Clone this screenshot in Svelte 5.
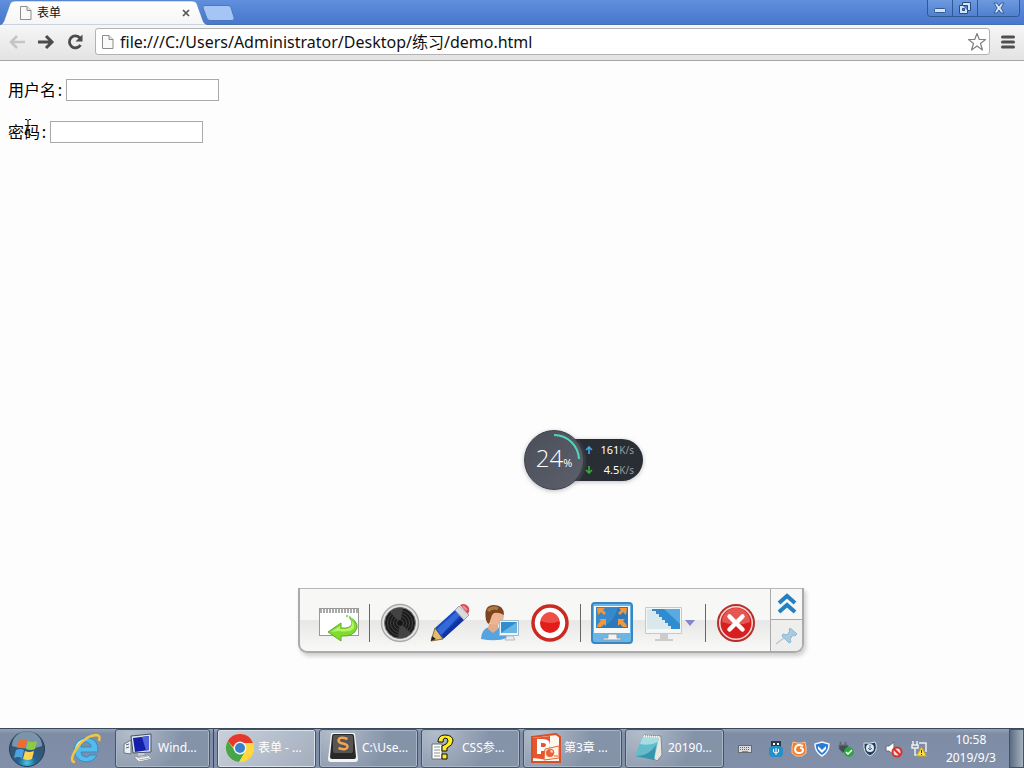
<script>
  let username = $state('');
  let password = $state('');
  const tasks = [
    { id: 'computer', label: 'Wind...', stacked: true },
    { id: 'chrome', label: '表单 - ...', active: true },
    { id: 'sublime', label: 'C:\\Use...' },
    { id: 'help', label: 'CSS参...' },
    { id: 'ppt', label: '第3章 ...' },
    { id: 'notepad', label: '20190...' }
  ];
</script>

{#snippet page()}
  <svg width="12" height="14" viewBox="0 0 12 14" aria-hidden="true">
    <path d="M.5.5h6.5l4 4v9H.5z" fill="#fafafa" stroke="#8d8d8d" />
    <path d="M7 .5v4h4" fill="#e4e4e4" stroke="#8d8d8d" />
  </svg>
{/snippet}

{#snippet taskIcon(id)}
  {#if id === 'computer'}
    <svg width="32" height="30" viewBox="0 0 32 30" aria-hidden="true">
      <path d="M1 11l7-4v14l-7-1z" fill="#eceff0" stroke="#6c7680" />
      <path d="M3 12l3-1M3 15l3-1" stroke="#536574" />
      <path d="M8 3l20-2v18l-18 1z" fill="#dfe5ea" stroke="#445369" />
      <path d="M10 5l16-2v14l-14 2z" fill="#1420a9" />
      <path d="M19 4l7-1v14l-3 .500z" fill="#5364df" />
      <path d="M15 20h6l1 3h-7z" fill="#c6ced4" />
      <path d="M11 24l14-2 4 4-13 3z" fill="#f4f5f4" stroke="#8e98a0" />
      <path d="M14 25l11-2M16 27l11-2" stroke="#a4adb2" />
    </svg>
  {:else if id === 'chrome'}
    <svg width="30" height="30" viewBox="0 0 30 30" aria-hidden="true">
      <circle cx="15" cy="15" r="14" fill="#fbd641" />
      <path d="M2.8 8A14 14 0 0 1 28 10H15a6 6 0 0 0-6 5z" fill="#e5392f" />
      <path d="M2.8 8A14 14 0 0 0 14 29l6-10a6 6 0 0 1-10-1z" fill="#44a54a" />
      <path d="M28 10H15l5 9-6 10A14 14 0 0 0 28 10z" fill="#ffd83d" />
      <circle cx="15" cy="15" r="6.5" fill="#f2f4f3" />
      <circle cx="15" cy="15" r="5" fill="#3b80cc" />
    </svg>
  {:else if id === 'sublime'}
    <svg width="32" height="30" viewBox="0 0 32 30" aria-hidden="true">
      <path d="M4 1q0-1 2-1h20q2 0 2 1l3 25q0 3-3 3H4q-3 0-3-3z" fill="#f4f4f4" />
      <path d="M5 3q0-2 2-2h18q2 0 2 2l2 21q0 2-2 2H5q-2 0-2-2z" fill="#292929" />
      <rect x="6" y="2" width="20" height="18" rx="2" fill="#565553" />
      <path d="M20.500 6q-8-3-9 1 0 3 4.500 3.500 5 1 4.500 3.500-1 4-9 1" fill="none" stroke="#f4a453" stroke-width="2.500" />
    </svg>
  {:else if id === 'help'}
    <svg width="30" height="30" viewBox="0 0 30 30" aria-hidden="true">
      <path d="M3 11h10v15H3z" fill="#fff" stroke="#68727b" />
      <path d="M5 14h6M5 17h6M5 20h6M5 23h6" stroke="#8a9196" />
      <path d="M9 9q0-7 7-7 8 0 8 6 0 4-6 7v3h-5v-5q6-2 6-5 0-3-3-3-2 0-2 4z" fill="#ffed20" stroke="#111" />
      <path d="M13 21h5v5h-5z" fill="#ffed20" stroke="#111" />
    </svg>
  {:else if id === 'ppt'}
    <svg width="30" height="30" viewBox="0 0 30 30" aria-hidden="true">
      <path d="M1 4l24-3 4 3v25H1z" fill="#fff8ed" stroke="#d85028" stroke-width="2" />
      <path d="M2 5l17-2v24L2 25z" fill="#e4572e" />
      <path d="M8 21V8h4q5 0 5 4t-5 4H8" fill="none" stroke="#fff" stroke-width="4" />
      <path d="M14 16l14-3v12l-15 2z" fill="#fff3ea" stroke="#e66a3c" />
      <circle cx="19" cy="20" r="4" fill="#e76236" />
      <path d="M19 20v-4a4 4 0 0 1 4 4zM23 23h4" fill="#ffd9be" stroke="#e76236" />
    </svg>
  {:else}
    <svg width="32" height="30" viewBox="0 0 32 30" aria-hidden="true">
      <path d="M11 2l17 1 1 19-5 6-3-2z" fill="#e7e8df" stroke="#808a8a" />
      <path d="M10 3l16 1-5 23-19-4z" fill="#64bccb" />
      <path d="M10 3l16 1-1 5q-8 4-18 2z" fill="#a6dce3" />
      <path d="M2 23q13 1 21-11l-2 15z" fill="#3796ab" />
      <path d="M11 3l16 1" stroke="#f6f6ef" stroke-width="2" stroke-dasharray="1 1" />
    </svg>
  {/if}
{/snippet}

<div class="screen">
  <header class="titlebar">
    <div class="tab">
      <svg class="tab-shape" width="208" height="25" viewBox="0 0 208 25" aria-hidden="true">
        <defs><linearGradient id="tabfill" x2="0" y2="1"><stop stop-color="#fff" /><stop offset="1" stop-color="#f5f5f5" /></linearGradient></defs>
        <path d="M0 25q3-1 4-4l6-17q1-3 5-3h177q4 0 5 3l6 17q1 3 5 4z" fill="url(#tabfill)" stroke="#456eaa" stroke-opacity=".5" />
      </svg>
      {@render page()}
      <span class="tab-title">表单</span>
      <button class="plain" aria-label="关闭标签页">
        <svg width="8" height="8" viewBox="0 0 8 8"><path d="M1 1l6 6M7 1l-6 6" stroke="#555" stroke-width="1.7" /></svg>
      </button>
    </div>
    <button class="plain newtab" aria-label="新标签页">
      <svg width="33" height="16" viewBox="0 0 33 16"><path d="M3 .5h23q2 0 3 2l3 10q1 3-2 3H8q-2 0-3-2L1 3Q0 1 3 .5z" fill="#a5c6f4" stroke="#4b77bd" /></svg>
    </button>
    <div class="window-buttons">
      <button aria-label="最小化"><svg width="14" height="12" viewBox="0 0 14 12"><rect x="1.5" y="6.5" width="11" height="4" rx="1" fill="#d3e3f8" stroke="#355b91" /></svg></button>
      <button aria-label="还原"><svg width="14" height="14" viewBox="0 0 14 14"><path d="M4.500 1.500h8v8h-3v3h-8v-8h3z" fill="#d3e3f8" stroke="#294d82" /><path d="M4.500 4.500h5v5M4.500 7.500h2v2h-2z" fill="#527fc7" stroke="#294d82" /></svg></button>
      <button aria-label="关闭"><svg width="14" height="12" viewBox="0 0 14 12"><path d="M2 1h3l2 3 2-3h3L9 6l3 5H9L7 8l-2 3H2l3-5z" fill="#d3e3f8" stroke="#355b91" /></svg></button>
    </div>
  </header>

  <nav class="toolbar" aria-label="浏览器">
    <button class="plain" aria-label="后退"><svg width="18" height="16" viewBox="0 0 18 16"><path d="M17 8H4M9 2L3 8l6 6" fill="none" stroke="#c5c5c5" stroke-width="2.500" /></svg></button>
    <button class="plain" aria-label="前进"><svg width="18" height="16" viewBox="0 0 18 16"><path d="M1 8h13M9 2l6 6-6 6" fill="none" stroke="#4b4b4b" stroke-width="3" /></svg></button>
    <button class="plain" aria-label="重新加载"><svg width="18" height="16" viewBox="0 0 18 16"><path d="M14 4A6 6 0 1 0 14.500 11" fill="none" stroke="#4b4b4b" stroke-width="2.800" /><path d="M16.500.5V7.500h-7z" fill="#4b4b4b" /></svg></button>
    <div class="address">
      {@render page()}
      <input aria-label="地址" value="file:///C:/Users/Administrator/Desktop/练习/demo.html" />
      <button class="plain" aria-label="收藏"><svg width="20" height="20" viewBox="0 0 20 20"><path d="M10 1.500l2.300 6h6.200l-5 4 2 6.500-5.500-4-5.500 4 2-6.500-5-4h6.200z" fill="#fff" stroke="#808080" stroke-width="1.200" stroke-linejoin="round" /></svg></button>
    </div>
    <button class="plain menu" aria-label="菜单"><svg width="14" height="14" viewBox="0 0 14 14"><path d="M1.500 2h11M1.500 7h11M1.500 12h11" stroke="#505050" stroke-width="3" stroke-linecap="round" /></svg></button>
  </nav>

  <main>
    <form>
      <div class="field"><label for="user">用户名<span>:</span></label><input id="user" type="text" bind:value={username} /></div>
      <div class="field"><label for="pass">密码<span>:</span></label><input id="pass" type="password" bind:value={password} /></div>
    </form>
    <svg class="cursor" width="8" height="16" viewBox="0 0 8 16" aria-hidden="true"><path d="M1 .5h2l1 1 1-1h2M4 1v13M1 15.500h2l1-1 1 1h2M2 10.500h4" fill="none" stroke="#111" /></svg>
  </main>

  <aside class="monitor" aria-label="网络速度">
    <div class="speeds">
      <div><svg width="8" height="8" viewBox="0 0 8 8"><path d="M4 8V1M1 4l3-3 3 3" fill="none" stroke="#3da5e8" stroke-width="1.700" /></svg><span><b>161</b>K/s</span></div>
      <div><svg width="8" height="8" viewBox="0 0 8 8"><path d="M4 0v7M1 4l3 3 3-3" fill="none" stroke="#32ad38" stroke-width="1.700" /></svg><span><b>4.5</b>K/s</span></div>
    </div>
    <div class="gauge">
      <svg width="58" height="58" viewBox="0 0 58 58" aria-hidden="true"><path d="M29 4A25 25 0 0 1 54 28" fill="none" stroke="#56d5bd" stroke-width="2" /></svg>
      <span>24<small>%</small></span>
    </div>
  </aside>

  <section class="recorder" aria-label="录制工具">
    <div class="tools">
      <button class="plain" aria-label="返回"><svg width="42" height="42" viewBox="0 0 42 42">
        <rect x="1.500" y="6.500" width="39" height="27" fill="#fff" stroke="#999" /><path d="M2 9h38" stroke="#aaa" stroke-width="4" stroke-dasharray="2 1" />
        <path d="M31 15q9 4 8 11-3 9-16 8v5L10 30l13-9v5q9 1 11-4 0-4-3-7z" fill="#7ddd2c" stroke="#62a832" /><path d="M33 18q4 4 3 8-4 5-15 3l-8 1 9-6v3q15 1 11-9z" fill="#b9f36a" /><path d="M28 14q5 0 7 6" fill="none" stroke="#8cdb68" stroke-width="2" stroke-dasharray="2 1" />
      </svg></button>
      <i></i>
      <button class="plain" aria-label="扬声器"><svg width="42" height="42" viewBox="0 0 42 42">
        <circle cx="21" cy="21" r="18.500" fill="#e4e4e4" stroke="#aaa" stroke-width="1.500" /><circle cx="21" cy="21" r="15.500" fill="#1b1b1b" stroke="#777" />
        <path d="M21 21L11 10a15 15 0 0 1 13-4zM21 21l11 10a15 15 0 0 1-13 5z" fill="#444" />
        <g fill="none" stroke="#424242"><circle cx="21" cy="21" r="12.500" /><circle cx="21" cy="21" r="9.500" /><circle cx="21" cy="21" r="6.500" /></g><circle cx="21" cy="21" r="3.500" fill="#161616" stroke="#444" />
      </svg></button>
      <button class="plain" aria-label="画笔"><svg width="42" height="42" viewBox="0 0 42 42">
        <path d="M2 39l4-13 8 11z" fill="#e7bd69" stroke="#876d45" /><path d="M2 39l1-5 4 3z" fill="#222" /><path d="M6 26L26 8l10 9-22 20z" fill="#1948c1" /><path d="M8 27L27 10l4 3-19 20z" fill="#346ad8" /><path d="M13 33l19-18 3 3-20 18z" fill="#1232a0" />
        <path d="M26 8l4-4 10 9-5 5z" fill="#d9dadd" stroke="#a4a4ac" /><path d="M31 3l3-1q4 0 6 4 1 3-1 6z" fill="#d84755" /><path d="M34 4l4 4" fill="none" stroke="#f18d92" stroke-width="2" />
      </svg></button>
      <button class="plain" aria-label="用户桌面"><svg width="42" height="42" viewBox="0 0 42 42">
        <path d="M2 37q1-13 12-12 12 0 14 11-10 4-26 1z" fill="#56a4df" /><path d="M10 22h9v5l-5 4-5-4z" fill="#e7a987" /><circle cx="16" cy="14" r="9" fill="#edb491" />
        <path d="M7 18Q4 3 15 3q10 0 10 10-5-3-10-2-3 2-3 5l-2 6q-2-1-3-4z" fill="#7a451f" /><path d="M9 9q4-5 10-2" fill="none" stroke="#ae7948" stroke-width="3" />
        <path d="M20.500 18.500h19v15h-19z" fill="#edf5f8" stroke="#a4b9c7" /><path d="M22 20h16v11H22z" fill="#328dcc" /><path d="M22 31l16-11v11z" fill="#68b4e3" /><path d="M28 34h6l2 4H26z" fill="#e7ecef" stroke="#b4bbc0" />
      </svg></button>
      <button class="plain" aria-label="录制"><svg width="42" height="42" viewBox="0 0 42 42"><circle cx="21" cy="21" r="17" fill="#fff" stroke="#cb2a22" stroke-width="3.500" /><circle cx="21" cy="21" r="10" fill="#e31d18" /><path d="M12 19a9 9 0 0 1 18 0q-8 4-18 0z" fill="#ee5049" /></svg></button>
      <i></i>
      <button class="plain" aria-label="全屏"><svg width="44" height="42" viewBox="0 0 44 42">
        <rect x="2" y="1" width="40" height="40" rx="3" fill="#6cb6e7" stroke="#3a86c3" stroke-width="2" /><path d="M4 4h36v27H4z" fill="#f6f9fa" /><path d="M6 5h32v21H6z" fill="#368acb" /><path d="M6 26q17-2 22-21h10v21z" fill="#2c78bb" />
        <g fill="#f5963b"><path d="M7 6h8l-2 2 3 3-2 2-3-3-3 3zM37 6h-8l2 2-3 3 2 2 3-3 3 3zM7 25l1-3 3-3-2-2h7v7l-2-2-3 3zM37 25l-1-3-3-3 2-2h-7v7l2-2 3 3z" /></g>
        <path d="M18 32h9v4h4v2H13v-2h5z" fill="#f4f4f4" stroke="#8ca1b1" />
      </svg></button>
      <button class="plain screen-choice" aria-label="选择屏幕"><svg width="54" height="42" viewBox="0 0 54 42">
        <path d="M3.500 5.500h36v26h-36z" fill="#f5f6f6" stroke="#c4c9ce" /><path d="M5 7h33v20H5z" fill="#d8e8ec" /><path d="M10 7h28v20h-9v-3h-3v-3h-3v-3h-3v-3h-3v-3h-3V9h-4z" fill="#2f8cce" /><path d="M22 7h16v15z" fill="#58aae0" />
        <path d="M18 32h8v5h5v2H13v-2h5z" fill="#ccc" /><path d="M43 18h10l-5 6z" fill="#8587cc" />
      </svg></button>
      <i></i>
      <button class="plain" aria-label="退出"><svg width="42" height="42" viewBox="0 0 42 42"><circle cx="21" cy="21" r="18" fill="#f8d9d5" stroke="#b3312e" stroke-width="2" /><circle cx="21" cy="21" r="15.500" fill="#d91e20" /><path d="M7 20a14 14 0 0 1 28 0q-12 5-28 0z" fill="#e45752" /><path d="M14.500 14.500l13 13M27.500 14.500l-13 13" stroke="#fff" stroke-width="4.500" stroke-linecap="round" /></svg></button>
    </div>
    <div class="side">
      <button class="plain" aria-label="收起"><svg width="20" height="22" viewBox="0 0 20 22"><path d="M2 10l8-7 8 7M2 19l8-7 8 7" fill="none" stroke="#2580c3" stroke-width="4" /></svg></button>
      <button class="plain" aria-label="固定"><svg width="24" height="20" viewBox="0 0 24 20"><path d="M1 18l9-7" stroke="#bcc6cc" stroke-width="1.500" /><path d="M15 2l7 6-2 2-2-1-3 4 1 3-2 1-7-7 1-2 4 1 3-4-1-1z" fill="#a8cbe2" stroke="#91b5cf" /></svg></button>
    </div>
  </section>

  <footer class="taskbar">
    <button class="plain start" aria-label="开始"><svg width="38" height="38" viewBox="0 0 38 38">
      <defs><radialGradient id="orb" cy=".9"><stop stop-color="#49c9e4" /><stop offset=".5" stop-color="#24638f" /><stop offset="1" stop-color="#345674" /></radialGradient></defs>
      <circle cx="19" cy="19" r="17.500" fill="url(#orb)" stroke="#203d5b" /><path d="M4 16a15 15 0 0 1 30 0q-14 5-30 0z" fill="#b6c9d6" opacity=".55" />
      <path d="M11 10q4-2 8 0l-2 8q-4-2-8 0z" fill="#f06b32" /><path d="M20 11q4 2 9 0l-2 8q-4 2-9 0z" fill="#8fca45" /><path d="M8 20q4-2 8 0l-2 8q-4-2-8 0z" fill="#4da3e2" /><path d="M17 21q4 2 9 0l-2 8q-4 2-9 0z" fill="#ffd34f" />
    </svg></button>
    <button class="plain ie" aria-label="Internet Explorer"><svg width="32" height="32" viewBox="0 0 32 32">
      <path d="M16 5a12 12 0 1 0 11 17h-7a5 5 0 0 1-9-3h17Q29 5 16 5zM11 14a5 5 0 0 1 10 0z" fill="#54bcec" fill-rule="evenodd" stroke="#318cc5" />
      <path d="M6 15q2-7 9-8" fill="none" stroke="#b6ecff" stroke-width="2" /><path d="M5 29Q-1 29 5 18 14 3 26 2q5 0 3 6" fill="none" stroke="#f2c543" stroke-width="2.500" />
    </svg></button>
    <div class="tasks">
      {#each tasks as task}
        <div class="task-slot" class:stacked={task.stacked}>
          <button class="task" class:active={task.active}>{@render taskIcon(task.id)}<span>{task.label}</span></button>
        </div>
      {/each}
    </div>
    <div class="tray">
      <svg width="16" height="16" viewBox="0 0 16 16" aria-hidden="true"><rect x="1.500" y="4.500" width="13" height="7" fill="#ddd" stroke="#666c73" /><path d="M3 6.500h10M3 8.500h10" stroke="#666" stroke-dasharray="1 1" /><path d="M5 10.500h6" stroke="#888" /></svg>
      <svg width="16" height="18" viewBox="0 0 16 18" aria-hidden="true"><path d="M3 1h10v6H3z" fill="#293a48" /><path d="M5 3h2v2H5zM9 3h2v2H9z" fill="#fff" /><rect x="1" y="6" width="14" height="11" rx="4" fill="#258fc7" /><path d="M8 8v7M5.500 9v3L8 13l2.500-1V9" fill="none" stroke="#fff" /></svg>
      <svg width="16" height="16" viewBox="0 0 16 16" aria-hidden="true"><path d="M2 1l4 1h5l3-1 1 5v6l-4 3H5l-4-3V6z" fill="#f57c25" stroke="#ffc29a" /><path d="M12 5Q5 2 4 8q0 4 4 4 4 0 4-3 0-2-3-2" fill="none" stroke="#fff" stroke-width="2" /></svg>
      <svg width="16" height="16" viewBox="0 0 16 16" aria-hidden="true"><path d="M8 1l7 2q0 8-7 12Q1 11 1 3z" fill="#2979d5" stroke="#eef6ff" stroke-width="1.500" /><path d="M4 5l4 4 4-4v3l-4 4-4-4z" fill="#fff" /></svg>
      <svg width="18" height="18" viewBox="0 0 18 18" aria-hidden="true"><path d="M2 5h9v6q-2 3-6 1l-3-3zM3 2h1v3H3zM8 2h1v3H8z" fill="#414e59" stroke="#67727a" /><circle cx="12" cy="12" r="5" fill="#2da541" /><path d="M9 12l2 2 4-4" fill="none" stroke="#fff" stroke-width="1.500" /></svg>
      <svg width="16" height="16" viewBox="0 0 16 16" aria-hidden="true"><path d="M2 2q6 1 11-1l1 2q2 8-6 12Q1 12 2 2z" fill="#243e61" stroke="#dbe5ef" /><circle cx="8" cy="7" r="4" fill="#e2ebf1" /><path d="M8 4v5M6 7l2 2 2-2" fill="none" stroke="#416a91" /></svg>
      <svg width="18" height="18" viewBox="0 0 18 18" aria-hidden="true"><path d="M1 6h3l5-4v13l-5-4H1z" fill="#fff" stroke="#656d75" /><circle cx="12" cy="12" r="4.500" fill="#f7dddd" stroke="#d6302f" stroke-width="2" /><path d="M9 9l6 6" stroke="#d6302f" stroke-width="2" /></svg>
      <svg width="18" height="18" viewBox="0 0 18 18" aria-hidden="true"><path d="M3 1v4M7 1v4M2 5h6v3H2zM5 8v7h5M9 3h7v9" fill="none" stroke="#eee" stroke-width="1.500" /><path d="M11.500 7l5 9h-10z" fill="#ffe04a" stroke="#c3a724" /><path d="M11.500 10v3M11.500 14v1" stroke="#333" /></svg>
    </div>
    <div class="clock"><time>10:58</time><time>2019/9/3</time></div>
    <button class="show" aria-label="显示桌面"></button>
  </footer>
</div>

<style>
  :global(body) { margin: 0; }
  * { box-sizing: border-box; }
  .screen { min-height: 100vh; display: flex; flex-direction: column; position: relative; overflow: hidden; background: #fdfdfd; font: 12px/16px "Noto Sans", "Noto Sans CJK SC", sans-serif; color: #111; }
  button, input { font: inherit; color: inherit; }
  svg { display: block; flex: none; }
  .plain { display: grid; place-items: center; padding: 0; border: 0; background: none; }
  .titlebar { display: flex; align-items: flex-start; height: 25px; background: linear-gradient(#608fdc, #4877cd); border-bottom: 1px solid #4770ae; }
  .tab { position: relative; display: flex; align-items: center; flex: 0 0 200px; height: 25px; padding: 0 10px 0 20px; gap: 5px; }
  .tab > * { position: relative; }
  .tab .tab-shape { position: absolute; left: 0; top: 0; }
  .tab-title { flex: 1; }
  .newtab { padding: 5px 2px; }
  .window-buttons { display: grid; grid-template-columns: 25px 25px 41px; height: 17px; margin-left: auto; margin-right: 4px; border: 1px solid #315991; border-top: 0; border-radius: 0 0 4px 4px; overflow: hidden; }
  .window-buttons button { display: grid; place-items: center; padding: 0; border: 0; border-right: 1px solid #315991; background: linear-gradient(#6d99df, #5080cf); }
  .window-buttons button:last-child { border-right: 0; }
  .toolbar { display: flex; align-items: center; height: 36px; padding: 0 9px 2px 8px; gap: 11px; background: linear-gradient(#f6f6f6, #e3e3e3); border-bottom: 1px solid #a6a6a6; }
  .address { display: flex; align-items: center; flex: 1; min-width: 0; height: 27px; padding: 0 2px 0 6px; gap: 6px; background: #fff; border: 1px solid #b2b2b2; border-radius: 3px; }
  .address input { flex: 1; min-width: 0; padding: 0; border: 0; outline: 0; background: none; font-size: 16px; line-height: 24px; }
  main { position: relative; flex: 1; padding: 18px 8px; }
  form { display: grid; gap: 20px; font: 16px/20px "Noto Sans CJK SC", sans-serif; color: #000; }
  .field { display: flex; align-items: flex-start; gap: 2px; }
  .field label { display: flex; }
  .field label span { width: 8px; text-align: center; }
  .field input { width: 153px; height: 22px; padding: 1px 2px; border: 1px solid #a9a9a9; background: #fff; outline: 0; }
  .cursor { position: absolute; left: 24px; top: 58px; }
  .monitor { position: absolute; left: 524px; top: 430px; display: flex; align-items: center; }
  .gauge { display: grid; place-items: center; order: -1; width: 60px; height: 60px; border-radius: 50%; background: linear-gradient(135deg, #4b4f5a, #5b606b); border: 1px solid #3b404a; box-shadow: 0 1px 4px #8888; color: #fff; z-index: 1; }
  .gauge > * { grid-area: 1 / 1; }
  .gauge span { font: 300 24px/30px "Open Sans", sans-serif; }
  .gauge small { font-size: 11px; font-weight: 400; }
  .speeds { display: grid; align-content: space-evenly; width: 90px; height: 42px; margin-left: -31px; padding: 0 9px 0 32px; border-radius: 21px; background: #292d34; box-shadow: 0 1px 4px #8888; color: #999; font-size: 10px; }
  .speeds div { display: flex; align-items: center; justify-content: space-between; }
  .speeds b { font-size: 11px; font-weight: 400; color: #fff; }
  .recorder { position: absolute; left: 298px; top: 588px; display: flex; height: 65px; border: 2px solid #aaa; border-top: 1px solid #b7b7b7; border-radius: 0 0 9px 9px; background: linear-gradient(#f7f7f5 0 50%, #e7e7e6 50%, #f9f9f8); box-shadow: 2px 3px 4px #ccc; overflow: hidden; }
  .tools { display: flex; align-items: center; gap: 8px; padding: 5px 13px 0 18px; }
  .tools i { width: 1px; height: 38px; margin: 0 1px; background: #666; }
  .side { display: grid; grid-template-rows: 30px 1fr; width: 32px; border-left: 1px solid #aaa; }
  .side button + button { border-top: 1px solid #aaa; background: #eeeeed; }
  .taskbar { display: flex; align-items: center; height: 40px; background: linear-gradient(#96a3b7, #7e8da5 12%, #8190a8); border-top: 1px solid #39485b; color: #fff; }
  .start { width: 54px; }
  .ie { width: 61px; padding-left: 2px; }
  .tasks { display: flex; gap: 3px; height: 39px; }
  .task-slot { width: 99px; min-width: 0; }
  .stacked { padding-right: 3px; border-right: 1px solid #364657; }
  .task { display: flex; align-items: center; gap: 3px; width: 100%; height: 39px; padding: 0 5px 2px 7px; border: 1px solid #455369; border-radius: 3px; background: radial-gradient(circle at 15% 0, #b4becb, transparent 60%), #8593a9; box-shadow: inset 0 0 0 1px #aab5c5; color: #fff; white-space: nowrap; overflow: hidden; }
  .task.active { background: linear-gradient(135deg, #c9d0da, #a2adbd); box-shadow: inset 0 0 0 1px #dbe1e8; }
  .tray { display: flex; align-items: center; gap: 7px; margin-left: auto; }
  .tray svg:first-child { margin-right: 8px; }
  .clock { display: grid; margin-left: 18px; margin-right: 13px; text-align: center; line-height: 18px; }
  .show { width: 15px; height: 39px; padding: 0; border: 1px solid #435365; background: linear-gradient(90deg, #5c6c80, #a6b2c0); }
</style>
